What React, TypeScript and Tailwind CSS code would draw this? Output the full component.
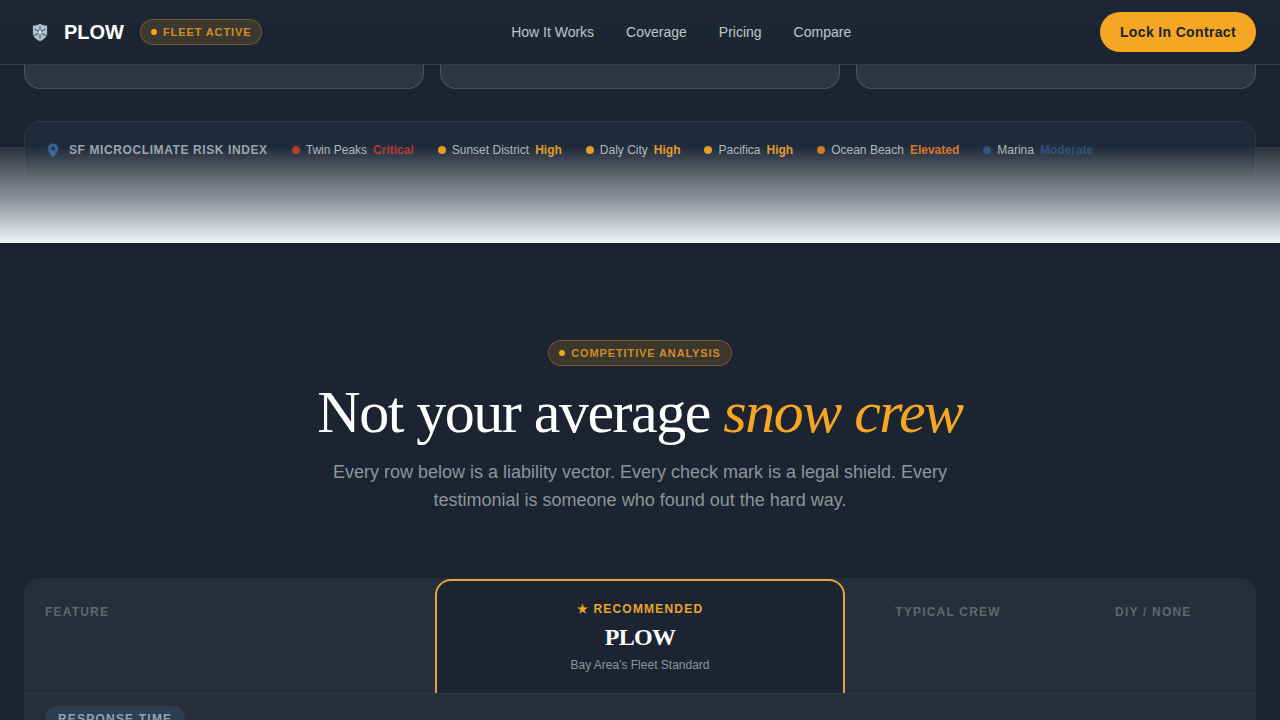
const sans = 'font-["Liberation_Sans",Arial,sans-serif]';

const navLinks = ['How It Works', 'Coverage', 'Pricing', 'Compare'];

const riskAreas = [
  { name: 'Twin Peaks', level: 'Critical', dot: 'bg-[#c0392b]', text: 'text-[#c0392b]' },
  { name: 'Sunset District', level: 'High', dot: 'bg-[#f5a623]', text: 'text-[#f5a623]' },
  { name: 'Daly City', level: 'High', dot: 'bg-[#f5a623]', text: 'text-[#f5a623]' },
  { name: 'Pacifica', level: 'High', dot: 'bg-[#f5a623]', text: 'text-[#f5a623]' },
  { name: 'Ocean Beach', level: 'Elevated', dot: 'bg-[#e67e22]', text: 'text-[#e67e22]' },
  { name: 'Marina', level: 'Moderate', dot: 'bg-[#2c5282]', text: 'text-[#2c5282]' },
];

function ShieldLogo() {
  return (
    <svg width="16" height="19" viewBox="0 0 16 19" className="shrink-0">
      <path d="M8 0.5 C10 1.6 12.5 2.2 15.5 2.4 V9 C15.5 13.5 12.5 16.8 8 18.5 C3.5 16.8 0.5 13.5 0.5 9 V2.4 C3.5 2.2 6 1.6 8 0.5 Z" fill="#b4c4c8" stroke="#1d3a55" strokeWidth="1" />
      <g stroke="#3d6076" strokeWidth="1.1" strokeLinecap="round">
        <path d="M8 3.5 V15" />
        <path d="M3 6.2 L13 12.2" />
        <path d="M13 6.2 L3 12.2" />
      </g>
      <circle cx="8" cy="9.2" r="1.5" fill="#eef2f3" />
    </svg>
  );
}

function Pill({ label, className }: { label: string; className: string }) {
  return (
    <div className={`inline-flex items-center rounded-full border border-[#f5a623]/30 bg-[#f5a623]/15 ${className}`}>
      <span className="h-1.5 w-1.5 rounded-full bg-[#f5a623]" />
      <span className="text-[11px] font-bold leading-none tracking-[0.88px] text-[#f5a623]/80">{label}</span>
    </div>
  );
}

export default function App() {
  return (
    <div className={`h-[720px] overflow-hidden bg-[#1b2430] ${sans}`}>
      {/* top nav */}
      <nav className="flex h-[65px] items-center justify-between border-b border-white/10 bg-gradient-to-b from-[#1e2735] to-[#1b2430] pl-8 pr-6">
        <div className="flex items-center">
          <ShieldLogo />
          <span className="ml-4 text-xl font-bold text-white">PLOW</span>
          <Pill label="FLEET ACTIVE" className="ml-4 h-[26px] gap-[6px] px-2.5" />
        </div>
        <div className="flex gap-8 text-sm text-[#bfc5cc]">
          {navLinks.map((link) => (
            <span key={link}>{link}</span>
          ))}
        </div>
        <button className="h-10 rounded-full bg-[#f5a623] px-5 text-sm font-bold tracking-[0.35px] text-[#1b2430]">
          Lock In Contract
        </button>
      </nav>

      {/* end of the previous section, faded out at the bottom */}
      <section className="relative h-[178px] bg-gradient-to-b from-[#1b2430] from-[82px] to-[#2c323c] to-[82px] px-6">
        <div className="grid grid-cols-3 gap-4">
          {[0, 1, 2].map((i) => (
            <div key={i} className="h-6 rounded-b-2xl border border-t-0 border-white/15 bg-[#2e3540]" />
          ))}
        </div>
        <div className="mt-8 flex h-[60px] items-start rounded-t-2xl border border-b-0 border-white/5 bg-gradient-to-b from-[#1f2b3a] from-45% to-[#2c323c] px-[22px] pt-[20px]">
          <svg width="12" height="15" viewBox="0 0 12 15" className="mr-[10px] mt-[1px] shrink-0">
            <path d="M6 0.5 C2.8 0.5 0.8 2.8 0.8 5.5 C0.8 9 6 14.5 6 14.5 C6 14.5 11.2 9 11.2 5.5 C11.2 2.8 9.2 0.5 6 0.5 Z" fill="#34608f" />
            <circle cx="6" cy="5.5" r="1.8" fill="#1f2b3a" />
          </svg>
          <span className="mr-6 text-xs font-bold leading-4 tracking-[0.6px] text-[#9aa3ad]">SF MICROCLIMATE RISK INDEX</span>
          <div className="flex gap-6">
            {riskAreas.map((area) => (
              <div key={area.name} className="flex items-center text-xs leading-4 opacity-90">
                <span className={`mr-1.5 h-2 w-2 rounded-full ${area.dot}`} />
                <span className="mr-1.5 text-[#bfc5cc]">{area.name}</span>
                <span className={`font-bold ${area.text}`}>{area.level}</span>
              </div>
            ))}
          </div>
        </div>
        <div className="absolute inset-x-0 bottom-0 h-[96px] bg-gradient-to-b from-[#f0f4f8]/0 via-[#f0f4f8]/50 via-55% to-[#f0f4f8]" />
      </section>

      {/* comparison */}
      <section className="px-6 pt-[97px]">
        <div className="flex justify-center">
          <Pill label="COMPETITIVE ANALYSIS" className="h-[26px] gap-[6px] px-2.5" />
        </div>
        <h2 className='mt-[13px] text-center font-["Liberation_Serif",serif] text-[60px] leading-[66px] tracking-[-1.5px] text-white'>
          Not your average <em className="text-[#f5a623]">snow crew</em>
        </h2>
        <p className="mx-auto mt-[13px] w-[640px] text-center text-lg leading-7 text-[#8e949c]">
          Every row below is a liability vector. Every check mark is a legal shield. Every testimonial is someone who found out the hard way.
        </p>

        <div className="mt-[64px] overflow-hidden rounded-t-2xl bg-[#262f39]">
          <div className="grid h-[116px] grid-cols-[2fr_2fr_1fr_1fr] border-b border-white/5">
            <div className="px-[21px] pt-[26px] text-xs font-bold leading-4 tracking-[1.2px] text-[#5f6670]">FEATURE</div>
            <div className="mt-[1px] flex flex-col items-center rounded-t-2xl border-2 border-b-0 border-[#e2a33c] bg-[#1b2430] pt-[20px]">
              <div className="text-xs font-bold leading-4 tracking-[1.2px] text-[#e8a530]">★ RECOMMENDED</div>
              <div className='mt-[6px] font-["Liberation_Serif",serif] text-2xl font-bold leading-7 tracking-[-0.72px] text-white'>PLOW</div>
              <div className="mt-[6px] text-xs leading-4 text-[#8e949c]">Bay Area's Fleet Standard</div>
            </div>
            <div className="pt-[26px] text-center text-xs font-bold leading-4 tracking-[1.2px] text-[#5f6670]">TYPICAL CREW</div>
            <div className="pt-[26px] text-center text-xs font-bold leading-4 tracking-[1.2px] text-[#5f6670]">DIY / NONE</div>
          </div>
          <div className="h-[40px] px-[21px] pt-3">
            <span className="inline-block rounded-full bg-[#2c3e50] px-[13px] py-1.5 text-xs font-bold leading-[14px] tracking-[1.2px] text-[#8fa3b8]">
              RESPONSE TIME
            </span>
          </div>
        </div>
      </section>
    </div>
  );
}
